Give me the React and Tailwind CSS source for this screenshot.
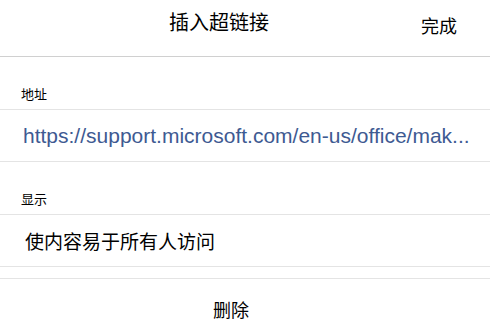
export default function App() {
  const cjk = { fontFamily: '"Noto Sans CJK SC", sans-serif' };
  return (
    <div className="w-[490px] h-[327px] bg-white overflow-hidden" style={cjk}>
      <div className="h-[57px] flex items-start border-b border-[#d0d0d0] text-black">
        <span className="ml-[169px] mt-[12px] text-[20px] leading-none">插入超链接</span>
        <span className="ml-auto mr-[33px] mt-[16px] text-[18px] leading-none">完成</span>
      </div>
      <div className="h-[53px] flex items-end pb-[9px] pl-[21px] text-[13px] leading-none text-black border-b border-[#e4e4e4]">地址</div>
      <div className="h-[52px] flex items-center pl-[23px] border-b border-[#e4e4e4]">
        <span className="text-[21px] leading-none text-[#3e5a92]" style={{ fontFamily: '"Liberation Sans", Arial, sans-serif' }}>
          https://support.microsoft.com/en-us/office/mak...
        </span>
      </div>
      <div className="h-[53px] flex items-end pb-[9px] pl-[21px] text-[13px] leading-none text-black border-b border-[#e4e4e4]">显示</div>
      <div className="h-[52px] flex items-center pl-[25px] text-[19px] leading-none text-black border-b border-[#e4e4e4]">使内容易于所有人访问</div>
      <div className="h-[12px] border-b border-[#e4e4e4]"></div>
      <div className="h-[47px] flex items-start justify-center pt-[21px] pr-[28px] text-[18px] leading-none text-black">删除</div>
    </div>
  );
}
